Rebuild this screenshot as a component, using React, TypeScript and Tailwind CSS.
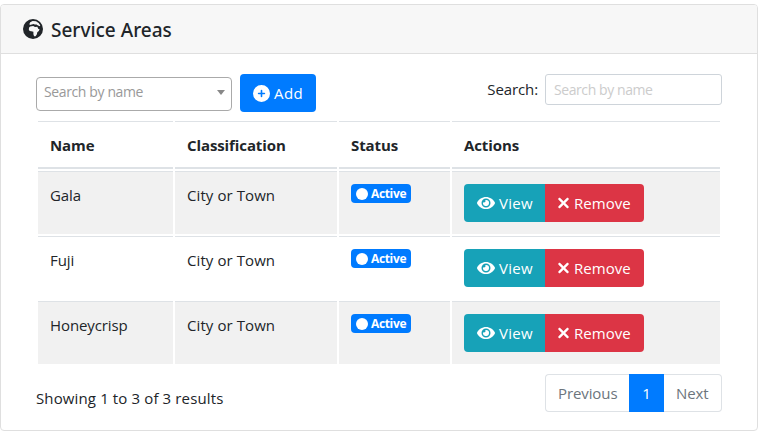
import React from "react";
import { FaEye } from "react-icons/fa";
import { FaCircle, FaCirclePlus, FaXmark } from "react-icons/fa6";

const rows = ["Gala", "Fuji", "Honeycrisp"];

const columns = [
  { label: "Name", className: "w-[135px]" },
  { label: "Classification", className: "w-[162px]" },
  { label: "Status", className: "w-[111px]" },
  { label: "Actions", className: "w-[268px]" },
];

function GlobeIcon() {
  return (
    <svg viewBox="0 0 20 20" className="size-5 shrink-0">
      <circle cx="10" cy="10" r="10" fill="#212529" />
      <path
        d="M7.2 3.2 9.6 2.1 13 2.3 15.6 3.9 17.2 6.2 17 7.3 15 6.6 13.6 5.4 11.8 5.5 10.6 4.9 8.8 5.6 6.9 6 6.4 5Z"
        fill="#f7f7f7"
      />
      <path
        d="M7.2 7.4 10.2 7.1 12 8 14.3 7.8 15.4 10 16.6 10.3 15.8 12 14.3 13.2 13.9 15.2 12.6 17.2 11.1 17.3 10.4 15.3 10.4 12.7 8.4 12.2 6.6 12 5.8 10.4 6.1 8.6Z"
        fill="#f7f7f7"
      />
    </svg>
  );
}

function Row({ name, striped }: { name: string; striped: boolean }) {
  const cell = `h-[63px] border-t border-[#dee2e6] px-3 align-top ${striped ? "bg-[#f1f1f1]" : "bg-white"}`;
  return (
    <tr>
      <td className={`${cell} pt-[11px]`}>{name}</td>
      <td className={`${cell} pt-[11px] tracking-[0.08px]`}>City or Town</td>
      <td className={`${cell} pt-3`}>
        <span className="flex h-[19px] w-[60px] items-center gap-[3px] rounded bg-[#007bff] pl-[5px] text-[12px] leading-none font-bold tracking-[-0.35px] text-white">
          <FaCircle className="size-3 shrink-0" />
          Active
        </span>
      </td>
      <td className={`${cell} pt-3`}>
        <div className="flex h-[38px] text-white">
          <button className="flex w-[81px] items-center gap-1 rounded-l bg-[#17a2b8] pl-[13px] tracking-[0.3px]">
            <FaEye className="size-[18px] shrink-0" />
            View
          </button>
          <button className="flex w-[99px] items-center gap-1 rounded-r bg-[#dc3545] pl-3 tracking-[0.05px]">
            <FaXmark className="h-4 w-[13px] shrink-0 stroke-white stroke-[16px]" />
            Remove
          </button>
        </div>
      </td>
    </tr>
  );
}

export default function App() {
  return (
    <div className="h-[434px] w-[758px] bg-white pt-1 font-['Open_Sans','Noto_Sans',sans-serif] text-[15px] leading-6 tracking-[-0.1px] text-[#212529]">
      <section className="h-[427px] overflow-hidden rounded border border-[#dfdfdf]">
        <header className="flex h-[49px] items-center gap-2 border-b border-[#dfdfdf] bg-[#f7f7f7] pl-[22px]">
          <GlobeIcon />
          <h1 className="mt-0.5 font-['Noto_Sans','Open_Sans',sans-serif] text-[19px] font-medium tracking-[0px]">
            Service Areas
          </h1>
        </header>
        <div className="px-[35px] pt-5">
          <div className="flex h-[38px] items-start">
            <div className="mt-[3px] flex h-[34px] w-[196px] items-center justify-between rounded border border-[#aaa] pr-[6px] pl-[7px] text-[14px] tracking-[-0.38px] text-[#999]">
              <span className="-mt-1">Search by name</span>
              <span className="-mt-1 border-x-4 border-t-5 border-x-transparent border-t-[#888]" />
            </div>
            <button className="ml-2 flex h-[38px] w-[76px] items-center gap-1 rounded bg-[#007bff] pl-[13px] tracking-[0.4px] text-white">
              <FaCirclePlus className="size-[17px] shrink-0" />
              Add
            </button>
            <label className="ml-auto flex h-[31px] items-center gap-[7px]">
              <span className="-mt-0.5">Search:</span>
              <input
                placeholder="Search by name"
                className="h-[31px] w-[177px] rounded-[3px] border border-[#ced4da] px-2 text-[14px] tracking-[-0.42px] placeholder:text-[#ccc]"
              />
            </label>
          </div>
          <table className="mt-[7px] w-[686px] table-fixed border-separate border-spacing-[2px]">
            <thead>
              <tr>
                {columns.map((c) => (
                  <th
                    key={c.label}
                    className={`h-12 border-t border-b-2 border-[#dee2e6] px-3 py-0 text-left font-bold ${c.className}`}
                  >
                    {c.label}
                  </th>
                ))}
              </tr>
            </thead>
            <tbody>
              {rows.map((name, i) => (
                <Row key={name} name={name} striped={i % 2 === 0} />
              ))}
            </tbody>
          </table>
          <footer className="mt-2 flex h-[38px] justify-between">
            <span className="mt-3 tracking-[0.13px]">Showing 1 to 3 of 3 results</span>
            <nav className="flex h-[38px] text-[#6c757d]">
              <span className="flex w-[84px] items-center rounded-l border border-r-0 border-[#dee2e6] pl-3">Previous</span>
              <span className="flex w-[35px] items-center justify-center bg-[#007bff] text-white">1</span>
              <span className="flex w-[58px] items-center rounded-r border border-l-0 border-[#dee2e6] pl-3">Next</span>
            </nav>
          </footer>
        </div>
      </section>
    </div>
  );
}
